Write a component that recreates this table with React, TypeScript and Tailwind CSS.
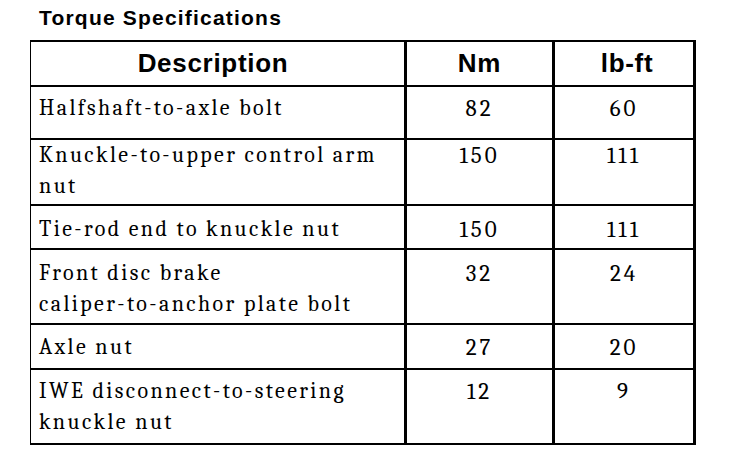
import React from "react";

const rows: { lines: string[]; nm: string; lb: string; h: string; pt: string }[] = [
  { lines: ["Halfshaft-to-axle bolt"], nm: "82", lb: "60", h: "h-[51px]", pt: "pt-[6px]" },
  { lines: ["Knuckle-to-upper control arm", "nut"], nm: "150", lb: "111", h: "h-[64px]", pt: "pt-0" },
  { lines: ["Tie-rod end to knuckle nut"], nm: "150", lb: "111", h: "h-[42px]", pt: "pt-[8px]" },
  { lines: ["Front disc brake", "caliper-to-anchor plate bolt"], nm: "32", lb: "24", h: "h-[73px]", pt: "pt-[8px]" },
  { lines: ["Axle nut"], nm: "27", lb: "20", h: "h-[43px]", pt: "pt-[7px]" },
  { lines: ["IWE disconnect-to-steering", "knuckle nut"], nm: "12", lb: "9", h: "h-[73px]", pt: "pt-[6px]" },
];

export default function App() {
  return (
    <div className="w-[752px] h-[456px] bg-white overflow-hidden text-black">
      <div className="font-['Liberation_Sans',Arial,sans-serif] font-bold text-[21px] leading-[20px] tracking-[1.2px] pl-[39px] pt-[8px] h-[40px]">
        Torque Specifications
      </div>
      <div className="ml-[30px] w-[666px] bg-black pt-[2px] pl-[1px] pr-[3px] pb-[2px] grid grid-cols-[373px_145px_138px] gap-x-[3px] gap-y-[2px]">
        <div className="bg-white h-[43px] pr-[9px] flex items-center justify-center font-['Liberation_Sans',Arial,sans-serif] font-bold text-[26px] tracking-[0.7px]">Description</div>
        <div className="bg-white h-[43px] flex items-center justify-center font-['Liberation_Sans',Arial,sans-serif] font-bold text-[26px] tracking-[0.7px]">Nm</div>
        <div className="bg-white h-[43px] pl-[6px] flex items-center justify-center font-['Liberation_Sans',Arial,sans-serif] font-bold text-[26px] tracking-[0.7px]">lb-ft</div>
        {rows.map((r, i) => (
          <React.Fragment key={i}>
            <div className={`bg-white ${r.h} ${r.pt} pl-[8px] font-serif text-[22px] leading-[31px] tracking-[2.4px] whitespace-nowrap`}>
              {r.lines.map((l, j) => (
                <div key={j}>{l}</div>
              ))}
            </div>
            <div className={`bg-white ${r.h} ${r.pt} text-center font-serif text-[23px] leading-[31px] tracking-[3px]`}>{r.nm}</div>
            <div className={`bg-white ${r.h} ${r.pt} text-center font-serif text-[23px] leading-[31px] tracking-[3px]`}>{r.lb}</div>
          </React.Fragment>
        ))}
      </div>
    </div>
  );
}
